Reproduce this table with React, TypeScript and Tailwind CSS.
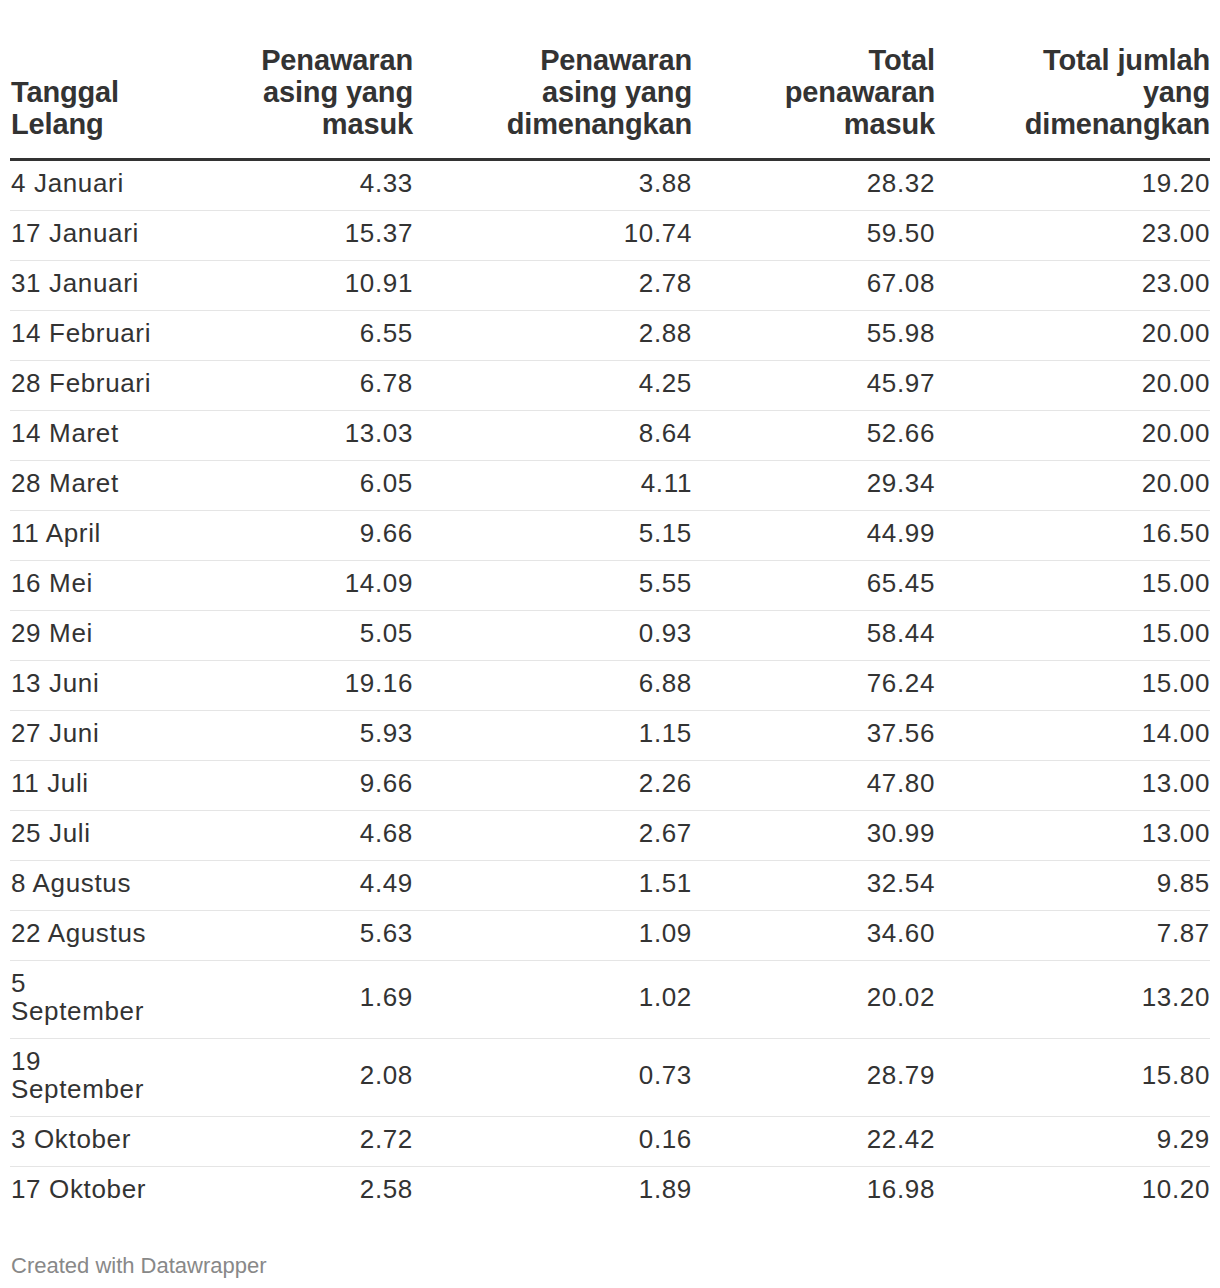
const rows = [
    ["4 Januari", "4.33", "3.88", "28.32", "19.20"],
    ["17 Januari", "15.37", "10.74", "59.50", "23.00"],
    ["31 Januari", "10.91", "2.78", "67.08", "23.00"],
    ["14 Februari", "6.55", "2.88", "55.98", "20.00"],
    ["28 Februari", "6.78", "4.25", "45.97", "20.00"],
    ["14 Maret", "13.03", "8.64", "52.66", "20.00"],
    ["28 Maret", "6.05", "4.11", "29.34", "20.00"],
    ["11 April", "9.66", "5.15", "44.99", "16.50"],
    ["16 Mei", "14.09", "5.55", "65.45", "15.00"],
    ["29 Mei", "5.05", "0.93", "58.44", "15.00"],
    ["13 Juni", "19.16", "6.88", "76.24", "15.00"],
    ["27 Juni", "5.93", "1.15", "37.56", "14.00"],
    ["11 Juli", "9.66", "2.26", "47.80", "13.00"],
    ["25 Juli", "4.68", "2.67", "30.99", "13.00"],
    ["8 Agustus", "4.49", "1.51", "32.54", "9.85"],
    ["22 Agustus", "5.63", "1.09", "34.60", "7.87"],
    ["5 September", "1.69", "1.02", "20.02", "13.20"],
    ["19 September", "2.08", "0.73", "28.79", "15.80"],
    ["3 Oktober", "2.72", "0.16", "22.42", "9.29"],
    ["17 Oktober", "2.58", "1.89", "16.98", "10.20"],
]

const headers = [
    ["Penawaran", "asing yang", "masuk"],
    ["Penawaran", "asing yang", "dimenangkan"],
    ["Total", "penawaran", "masuk"],
    ["Total jumlah", "yang", "dimenangkan"],
]

const cols = "grid grid-cols-[150px_253px_279px_243px_275px]"

export default function App() {
    return (
        <div className="w-[1220px] bg-white px-[10px] pt-[44px] text-[#333] font-['Liberation_Sans',Arial,sans-serif]">
            {/* header */}
            <div className={`${cols} items-end border-b-[3px] border-[#333] pb-[18px] text-[29px] leading-[32px] font-bold tracking-[-0.005em]`}>
                <div className="pl-px">Tanggal<br />Lelang</div>
                {headers.map((h, i) => (
                    <div key={i} className="text-right whitespace-nowrap">
                        {h.map((line, j) => (
                            <div key={j}>{line}</div>
                        ))}
                    </div>
                ))}
            </div>

            {/* body rows */}
            {rows.map((r, idx) => (
                <div
                    key={r[0]}
                    className={`${cols} items-center pt-[7.5px] pb-[13.5px] text-[26px] leading-[28px] tracking-[0.025em] ${idx < rows.length - 1 ? "border-b border-[#e5e5e5]" : ""}`}
                >
                    <div className="pl-px">{r[0]}</div>
                    {r.slice(1).map((v, i) => (
                        <div key={i} className="text-right">{v}</div>
                    ))}
                </div>
            ))}

            <div className="mt-[38px] pl-px text-[22px] leading-[24px] text-[#888]">
                Created with Datawrapper
            </div>
        </div>
    )
}
